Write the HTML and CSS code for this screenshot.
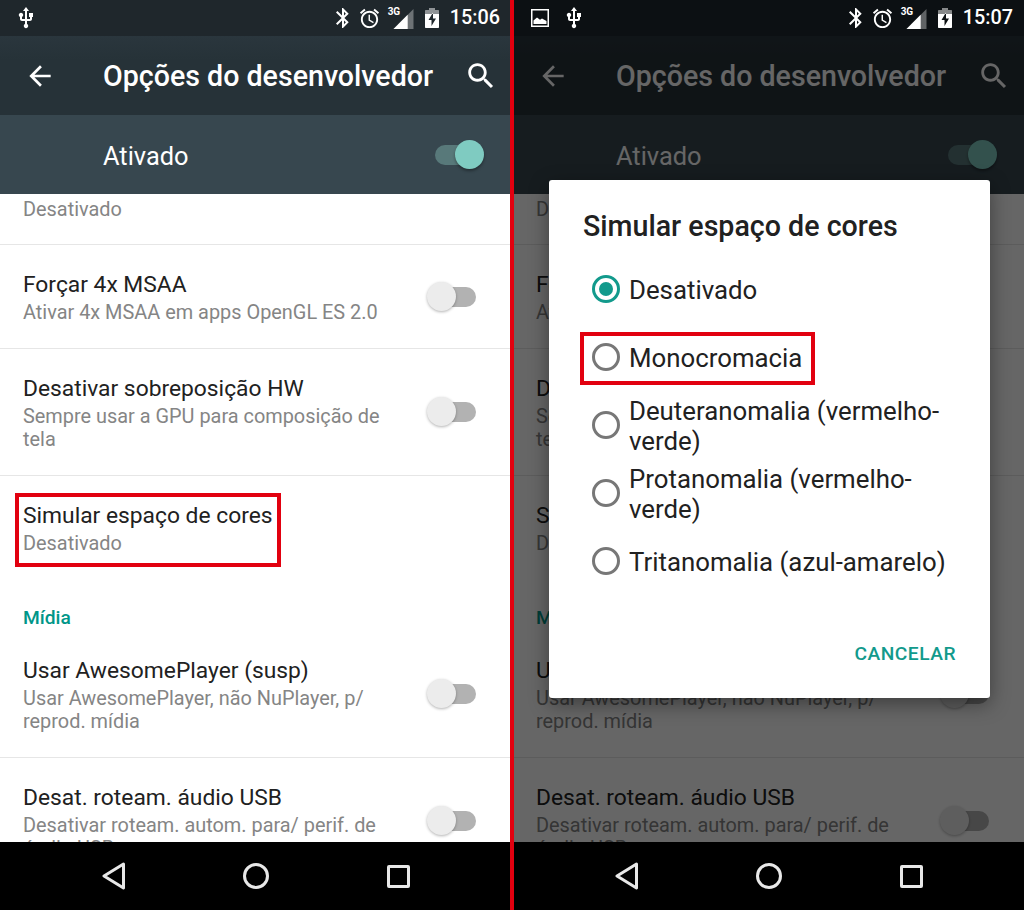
FILE: index.html
```html
<!DOCTYPE html>
<html lang="pt">
<head>
<meta charset="utf-8">
<title>Opções do desenvolvedor</title>
<link rel="stylesheet" href="styles.css">
</head>
<body>
<svg class="defs" width="0" height="0" aria-hidden="true">
  <symbol id="i-usb" viewBox="0 0 24 24"><path d="M15 7v4h1v2h-3V5h2l-3-4-3 4h2v8H8v-2.07c.7-.37 1.2-1.08 1.2-1.93 0-1.21-.99-2.2-2.2-2.2-1.21 0-2.2.99-2.2 2.2 0 .85.5 1.56 1.2 1.93V13c0 1.11.89 2 2 2h3v3.05c-.71.37-1.2 1.1-1.2 1.95 0 1.22.99 2.2 2.2 2.2 1.21 0 2.2-.98 2.2-2.2 0-.85-.49-1.58-1.2-1.95V15h3c1.11 0 2-.89 2-2v-2h1V7h-4z"/></symbol>
  <symbol id="i-bt" viewBox="0 0 24 24"><path d="M17.71 7.71L12 2h-1v7.59L6.41 5 5 6.41 10.59 12 5 17.59 6.41 19 11 14.41V22h1l5.71-5.71-4.3-4.29 4.3-4.29zM13 5.83l1.88 1.88L13 9.59V5.83zm1.88 10.46L13 18.17v-3.76l1.88 1.88z"/></symbol>
  <symbol id="i-alarm" viewBox="0 0 24 24"><path d="M22 5.72l-4.6-3.86-1.29 1.53 4.6 3.86L22 5.72zM7.88 3.39L6.6 1.86 2 5.71l1.29 1.53 4.59-3.85zM12.5 8H11v6l4.75 2.85.75-1.23-4-2.37V8zM12 4c-4.97 0-9 4.03-9 9s4.02 9 9 9c4.97 0 9-4.03 9-9s-4.03-9-9-9zm0 16c-3.87 0-7-3.13-7-7s3.13-7 7-7 7 3.13 7 7-3.13 7-7 7z"/></symbol>
  <symbol id="i-signal" viewBox="0 0 24 24"><path d="M24 0L0 24h24z" fill-opacity=".35"/><path d="M17 7L0 24h17z"/></symbol>
  <symbol id="i-batt" viewBox="0 0 14 20"><path d="M4 0h6v2H4z" fill-opacity=".5"/><path d="M1 2h12c.6 0 1 .4 1 1v3H0V3c0-.6.4-1 1-1z" fill-opacity=".5"/><path fill-rule="evenodd" d="M0 6h14v13c0 .6-.4 1-1 1H1c-.6 0-1-.4-1-1zM8 4.500L3.500 12H6.500V18L11 10.500H8z"/></symbol>
  <symbol id="i-image" viewBox="0 0 18 18"><path fill-rule="evenodd" d="M0 0h18v18H0zM1.500 1.500v15h15v-15z"/><path d="M2.500 15v-3.500L6 8.500l3 2.200 2-1.200 4.500 2.500V15z"/></symbol>
  <symbol id="i-back" viewBox="0 0 24 24"><path d="M20 11H7.830l5.590-5.590L12 4l-8 8 8 8 1.410-1.410L7.830 13H20v-2z"/></symbol>
  <symbol id="i-search" viewBox="0 0 24 24"><path d="M15.500 14h-.79l-.28-.27C15.410 12.590 16 11.110 16 9.500 16 5.910 13.090 3 9.500 3S3 5.910 3 9.500 5.910 16 9.500 16c1.610 0 3.090-.59 4.230-1.570l.27.28v.79l5 4.990L20.490 19l-4.990-5zm-6 0C7.010 14 5 11.990 5 9.500S7.010 5 9.500 5 14 7.010 14 9.500 11.990 14 9.500 14z"/></symbol>
  <symbol id="i-nav-back" viewBox="0 0 24 28"><path d="M21.500 2L2 14l19.500 12z" fill="none" stroke="currentColor" stroke-width="3" stroke-linejoin="round"/></symbol>
</svg>

<main class="screens">
  <section class="phone">
    <header class="status">
      <div class="status-left">
        <svg class="ic ic-usb"><use href="#i-usb"/></svg>
      </div>
      <div class="status-right">
        <svg class="ic ic-bt"><use href="#i-bt"/></svg>
        <svg class="ic ic-alarm"><use href="#i-alarm"/></svg>
        <span class="net"><span class="net-label">3G</span><svg class="ic ic-signal"><use href="#i-signal"/></svg></span>
        <svg class="ic ic-batt"><use href="#i-batt"/></svg>
        <span class="time">15:06</span>
      </div>
    </header>
    <div class="toolbar">
      <svg class="ic ic-back"><use href="#i-back"/></svg>
      <h1 class="toolbar-title">Opções do desenvolvedor</h1>
      <svg class="ic ic-search"><use href="#i-search"/></svg>
    </div>
    <div class="master">
      <span class="master-label">Ativado</span>
      <span class="toggle toggle--on"></span>
    </div>
    <div class="list">
      <div class="row row--cut"><div class="row-text"><p class="sub">Desativado</p></div></div>
      <div class="row"><div class="row-text"><p class="title">Forçar 4x MSAA</p><p class="sub">Ativar 4x MSAA em apps OpenGL ES 2.0</p></div><span class="toggle"></span></div>
      <div class="row"><div class="row-text"><p class="title">Desativar sobreposição HW</p><p class="sub">Sempre usar a GPU para composição de tela</p></div><span class="toggle"></span></div>
      <div class="row row--plain"><div class="row-text"><p class="title">Simular espaço de cores</p><p class="sub">Desativado</p></div></div>
      <h2 class="section">Mídia</h2>
      <div class="row"><div class="row-text"><p class="title">Usar AwesomePlayer (susp)</p><p class="sub">Usar AwesomePlayer, não NuPlayer, p/ reprod. mídia</p></div><span class="toggle"></span></div>
      <div class="row"><div class="row-text"><p class="title">Desat. roteam. áudio USB</p><p class="sub">Desativar roteam. autom. para/ perif. de áudio USB</p></div><span class="toggle"></span></div>
    </div>
    <nav class="navbar">
      <svg class="ic ic-nav-back"><use href="#i-nav-back"/></svg>
      <span class="nav-home"></span>
      <span class="nav-recent"></span>
    </nav>
    <div class="mark mark--setting"></div>
  </section>

  <div class="divider"></div>

  <section class="phone phone--dim">
    <header class="status">
      <div class="status-left">
        <svg class="ic ic-image"><use href="#i-image"/></svg>
        <svg class="ic ic-usb"><use href="#i-usb"/></svg>
      </div>
      <div class="status-right">
        <svg class="ic ic-bt"><use href="#i-bt"/></svg>
        <svg class="ic ic-alarm"><use href="#i-alarm"/></svg>
        <span class="net"><span class="net-label">3G</span><svg class="ic ic-signal"><use href="#i-signal"/></svg></span>
        <svg class="ic ic-batt"><use href="#i-batt"/></svg>
        <span class="time">15:07</span>
      </div>
    </header>
    <div class="toolbar">
      <svg class="ic ic-back"><use href="#i-back"/></svg>
      <h1 class="toolbar-title">Opções do desenvolvedor</h1>
      <svg class="ic ic-search"><use href="#i-search"/></svg>
    </div>
    <div class="master">
      <span class="master-label">Ativado</span>
      <span class="toggle toggle--on"></span>
    </div>
    <div class="list">
      <div class="row row--cut"><div class="row-text"><p class="sub">Desativado</p></div></div>
      <div class="row"><div class="row-text"><p class="title">Forçar 4x MSAA</p><p class="sub">Ativar 4x MSAA em apps OpenGL ES 2.0</p></div><span class="toggle"></span></div>
      <div class="row"><div class="row-text"><p class="title">Desativar sobreposição HW</p><p class="sub">Sempre usar a GPU para composição de tela</p></div><span class="toggle"></span></div>
      <div class="row row--plain"><div class="row-text"><p class="title">Simular espaço de cores</p><p class="sub">Desativado</p></div></div>
      <h2 class="section">Mídia</h2>
      <div class="row"><div class="row-text"><p class="title">Usar AwesomePlayer (susp)</p><p class="sub">Usar AwesomePlayer, não NuPlayer, p/ reprod. mídia</p></div><span class="toggle"></span></div>
      <div class="row"><div class="row-text"><p class="title">Desat. roteam. áudio USB</p><p class="sub">Desativar roteam. autom. para/ perif. de áudio USB</p></div><span class="toggle"></span></div>
    </div>
    <nav class="navbar">
      <svg class="ic ic-nav-back"><use href="#i-nav-back"/></svg>
      <span class="nav-home"></span>
      <span class="nav-recent"></span>
    </nav>
    <div class="scrim"></div>
    <div class="dialog">
      <h2 class="dialog-title">Simular espaço de cores</h2>
      <div class="options">
        <div class="option"><span class="radio radio--on"></span><span class="option-label">Desativado</span></div>
        <div class="option"><span class="radio"></span><span class="option-label">Monocromacia</span></div>
        <div class="option"><span class="radio"></span><span class="option-label">Deuteranomalia (vermelho-verde)</span></div>
        <div class="option"><span class="radio"></span><span class="option-label">Protanomalia (vermelho-verde)</span></div>
        <div class="option"><span class="radio"></span><span class="option-label">Tritanomalia (azul-amarelo)</span></div>
      </div>
      <div class="actions"><span class="action">CANCELAR</span></div>
      <div class="mark mark--option"></div>
    </div>
  </section>
</main>
</body>
</html>
```
FILE: styles.css
```css
* { box-sizing: border-box; }
html, body { margin: 0; padding: 0; }
body { width: 1024px; height: 910px; overflow: hidden; font-family: Roboto, "Liberation Sans", sans-serif; background: #000; }
p, h1, h2 { margin: 0; font-weight: 400; }
.defs { position: absolute; }

.screens { display: flex; width: 1024px; height: 910px; }
.divider { flex: none; width: 4px; margin-right: -1px; background: #e2000f; position: relative; z-index: 5; }

.phone { --gut: 0px; position: relative; flex: none; width: 510px; height: 910px; display: flex; flex-direction: column; overflow: hidden; background: #fff; }
.phone--dim { --gut: 1px; width: 511px; }

.ic { display: block; fill: #fff; flex: none; }

.status { flex: none; height: 36px; display: flex; align-items: center; justify-content: space-between; padding: 0 calc(10px + var(--gut)) 0 14px; background: #1f272c; color: #fff; }
.phone--dim .status { background: #0c1013; }
.status-left { display: flex; align-items: center; gap: 13px; }
.phone--dim .status-left { padding-left: 4px; }
.status-right { display: flex; align-items: center; }
.ic-usb { width: 24px; height: 24px; }
.ic-image { width: 18px; height: 18px; }
.ic-bt { width: 24px; height: 24px; margin-right: 3px; }
.ic-alarm { width: 23px; height: 23px; margin-right: 7px; }
.net { position: relative; display: block; width: 26px; height: 22px; margin-right: 11px; }
.net-label { position: absolute; left: 0; top: -1px; font-size: 10px; line-height: 12px; font-weight: 700; letter-spacing: -.3px; }
.ic-signal { position: absolute; left: 5px; top: 2px; width: 21px; height: 20px; }
.ic-batt { width: 14px; height: 20px; margin-right: 11px; }
.time { font-size: 19.800px; font-weight: 500; line-height: 28px; }

.toolbar { flex: none; height: 79px; display: flex; align-items: center; padding: 1px calc(12px + var(--gut)) 0 24px; background: linear-gradient(#2a363d, #263238 30%, #263238); color: #fff; }
.ic-back { width: 32px; height: 32px; }
.toolbar-title { flex: 1; margin-left: 47px; font-size: 28.600px; font-weight: 500; line-height: 36px; white-space: nowrap; }
.ic-search { width: 34px; height: 34px; }

.master { flex: none; height: 79px; display: flex; align-items: center; justify-content: space-between; padding: 0 calc(26px + var(--gut)) 0 103px; background: #37474f; color: #fff; }
.master-label { padding-top: 2px; font-size: 25.400px; line-height: 32px; }

.toggle { position: relative; flex: none; display: block; width: 49px; height: 30px; }
.toggle::before { content: ""; position: absolute; left: 8px; right: 0; top: 5px; height: 20px; border-radius: 10px; background: #b2b2b2; }
.toggle::after { content: ""; position: absolute; left: 0; top: 0; width: 29px; height: 29px; border-radius: 50%; background: #ececec; box-shadow: 0 1px 3px rgba(0,0,0,.3); }
.toggle--on::before { left: 0; right: 8px; background: #58797a; }
.toggle--on::after { left: auto; right: 0; background: #7fcbc1; box-shadow: 0 2px 3px rgba(0,0,0,.35); }

.list { flex: none; height: 648px; overflow: hidden; background: #fff; }
.row { display: flex; align-items: center; justify-content: space-between; padding: 26px calc(34px + var(--gut)) 23px 23px; border-bottom: 1px solid #e6e6e6; }
.row .toggle { margin-bottom: 2px; }
.row--cut { padding-top: 4px; padding-bottom: 22.500px; }
.row--plain { border-bottom: 0; }
.row-text { width: 370px; }
.title { font-size: 22.800px; line-height: 28px; color: #212121; }
.sub { margin-top: 2px; font-size: 19.900px; line-height: 23.500px; color: #858585; }
.row--cut .sub { margin-top: 0; }
.section { height: 52.500px; padding: 28px 0 0 23px; font-size: 19.200px; line-height: 24px; font-weight: 500; color: #009688; }

.navbar { flex: none; height: 68px; background: #000; position: relative; display: grid; grid-template-columns: 229px 1fr 1fr; }
.ic-nav-back { position: absolute; left: 102px; top: 20px; width: 24px; height: 28px; color: #e8e8e8; fill: none; }
.nav-home { position: absolute; left: 243px; top: 21px; width: 26px; height: 26px; border: 3px solid #e8e8e8; border-radius: 50%; }
.nav-recent { position: absolute; left: 387px; top: 23px; width: 23px; height: 23px; border: 3px solid #e8e8e8; border-radius: 2px; }

.mark { position: absolute; border: 4px solid #e2000f; }
.mark--setting { left: 15px; top: 493px; width: 266px; height: 74px; }
.mark--option { left: 31px; top: 152px; width: 235px; height: 53px; }

.scrim { position: absolute; left: 0; right: 0; top: 36px; bottom: 68px; background: rgba(0,0,0,.6); }
.dialog { position: absolute; left: 36px; top: 180px; width: 441px; height: 518px; background: #fff; border-radius: 3px; box-shadow: 0 6px 20px rgba(0,0,0,.4); display: flex; flex-direction: column; }
.dialog-title { height: 75px; padding: 29px 0 0 34px; font-size: 28.600px; line-height: 34px; font-weight: 500; color: #212121; white-space: nowrap; }
.options { flex: none; display: flex; flex-direction: column; padding-left: 43px; }
.option { height: 68px; display: flex; align-items: center; gap: 9px; }
.radio { position: relative; flex: none; width: 28px; height: 28px; border: 3px solid #777; border-radius: 50%; }
.radio--on { border-color: #129a8c; }
.radio--on::after { content: ""; position: absolute; left: 4px; top: 4px; width: 14px; height: 14px; border-radius: 50%; background: #129a8c; }
.option-label { width: 330px; padding-top: 2px; font-size: 25.800px; line-height: 30px; color: #212121; }
.actions { flex: 1; display: flex; justify-content: flex-end; padding: 45px 34px 0 0; }
.action { font-size: 19.200px; line-height: 28px; font-weight: 500; letter-spacing: .5px; color: #129a8c; }
```
